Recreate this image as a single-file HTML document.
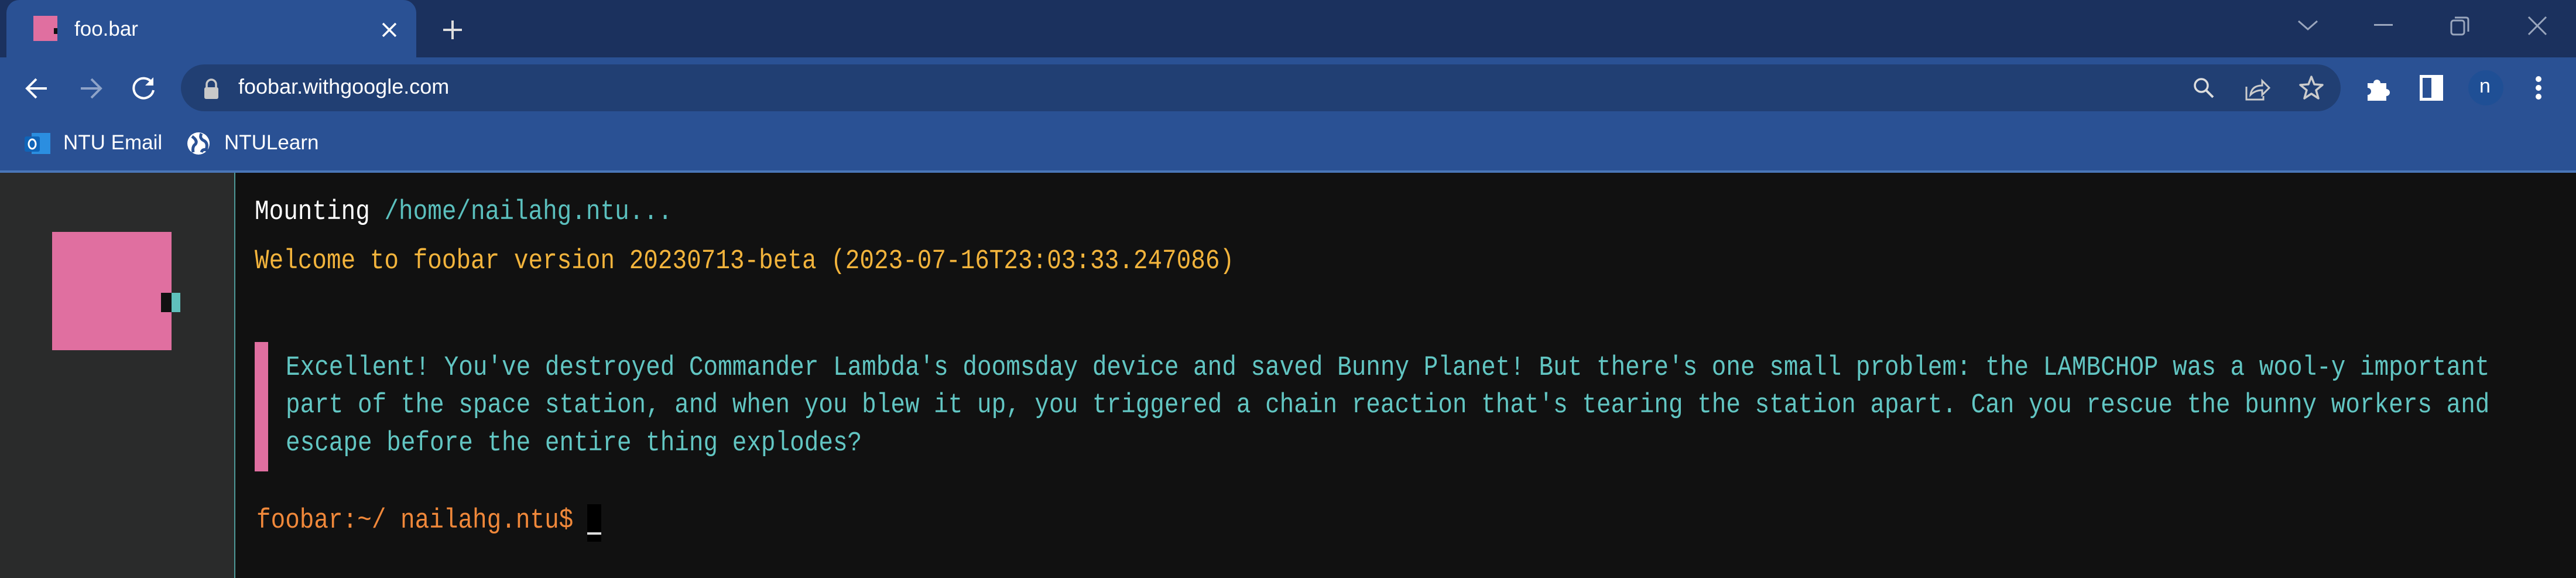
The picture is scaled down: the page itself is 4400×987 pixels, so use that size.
<!DOCTYPE html>
<html><head><meta charset="utf-8"><style>
*{margin:0;padding:0;box-sizing:border-box}
body{width:4400px;height:987px;overflow:hidden;background:#111;position:relative;font-family:"Liberation Sans",sans-serif}
.a{position:absolute}
.t{position:absolute;font-family:"Liberation Mono",monospace;font-size:41px;line-height:41px;white-space:pre;transform:scaleY(1.15);transform-origin:0 31px}
.ui{color:#fff;font-size:35px;line-height:40px}
</style></head><body>
<!-- tab strip -->
<div class="a" style="left:0;top:0;width:4400px;height:98px;background:#1b315e"></div>
<div class="a" style="left:11px;top:0;width:700px;height:98px;background:#2a5194;border-radius:22px 22px 0 0"></div>
<div class="a" style="left:57px;top:27px;width:41px;height:43px;background:#e06fa0"></div>
<div class="a" style="left:92px;top:48px;width:6px;height:10px;background:#111"></div>
<div class="a ui" style="left:127px;top:30px">foo.bar</div>
<svg class="a" style="left:650px;top:36px" width="30" height="30"><path d="M4 4L26 26M26 4L4 26" stroke="#fff" stroke-width="3.5"/></svg>
<svg class="a" style="left:754px;top:32px" width="38" height="38"><path d="M19 3V35M3 19H35" stroke="#ddd" stroke-width="4"/></svg>
<svg class="a" style="left:3922px;top:32px" width="40" height="22"><path d="M4 4L20 18L36 4" stroke="#9aa6bd" stroke-width="3" fill="none"/></svg>
<div class="a" style="left:4055px;top:41px;width:32px;height:3px;background:#9aa6bd"></div>
<svg class="a" style="left:4184px;top:26px" width="36" height="36"><rect x="3" y="9" width="22" height="24" rx="4" stroke="#9aa6bd" stroke-width="3" fill="none"/><path d="M9 4H28Q32 4 32 8V28" stroke="#9aa6bd" stroke-width="3" fill="none"/></svg>
<svg class="a" style="left:4316px;top:26px" width="36" height="36"><path d="M3 3L33 33M33 3L3 33" stroke="#9aa6bd" stroke-width="3"/></svg>
<!-- toolbar -->
<div class="a" style="left:0;top:98px;width:4400px;height:195px;background:#2a5194"></div>
<div class="a" style="left:0;top:291px;width:4400px;height:4px;background:#4a76b8"></div>
<svg class="a" style="left:40px;top:128px" width="46" height="46"><path d="M40 23H6M22 7L6 23L22 39" stroke="#fff" stroke-width="4" fill="none"/></svg>
<svg class="a" style="left:132px;top:128px" width="46" height="46"><path d="M6 23H40M24 7L40 23L24 39" stroke="#8ea3c8" stroke-width="4" fill="none"/></svg>
<svg class="a" style="left:222px;top:126px" width="48" height="48"><path d="M38 16A17 17 0 1 0 40 28" stroke="#fff" stroke-width="4" fill="none"/><path d="M40 6V20H26" fill="#fff"/></svg>
<div class="a" style="left:309px;top:110px;width:3689px;height:80px;background:#213f73;border-radius:40px"></div>
<svg class="a" style="left:346px;top:134px" width="30" height="36"><path d="M7 16V10A8 8 0 0 1 23 10V16" stroke="#c9c9c9" stroke-width="3.5" fill="none"/><rect x="3" y="15" width="24" height="20" rx="3" fill="#c9c9c9"/></svg>
<div class="a ui" style="left:407px;top:128px;font-size:36px">foobar.withgoogle.com</div>
<svg class="a" style="left:3744px;top:130px" width="42" height="42"><circle cx="16" cy="16" r="11" stroke="#ddd" stroke-width="3.5" fill="none"/><path d="M24 24L36 36" stroke="#ddd" stroke-width="4"/></svg>
<svg class="a" style="left:3834px;top:128px" width="44" height="46"><path d="M3 20V42H32V36" stroke="#ccc" stroke-width="3" fill="none"/><path d="M10 34Q12 18 30 18V10L42 22L30 34V26Q18 26 10 34Z" stroke="#ccc" stroke-width="3" fill="none"/></svg>
<svg class="a" style="left:3926px;top:128px" width="44" height="44"><path d="M22 3L27 16L41 17L30 26L34 40L22 32L10 40L14 26L3 17L17 16Z" stroke="#ccc" stroke-width="3.5" fill="none" stroke-linejoin="round"/></svg>
<svg class="a" style="left:4040px;top:128px" width="46" height="46"><path d="M4 14H14A6 6 0 0 1 26 14H36V24A6 6 0 0 1 36 36V44H4V34A6 6 0 0 0 4 22Z" fill="#fff"/></svg>
<svg class="a" style="left:4133px;top:128px" width="40" height="44"><rect x="2.5" y="2.5" width="35" height="39" stroke="#fff" stroke-width="5" fill="none"/><rect x="20" y="2" width="18" height="40" fill="#fff"/></svg>
<div class="a" style="left:4216px;top:120px;width:60px;height:60px;border-radius:30px;background:#1f4f95"></div>
<div class="a ui" style="left:4235px;top:127px;font-size:34px">n</div>
<div class="a" style="left:4331px;top:130px;width:10px;height:10px;border-radius:5px;background:#fff"></div>
<div class="a" style="left:4331px;top:145px;width:10px;height:10px;border-radius:5px;background:#fff"></div>
<div class="a" style="left:4331px;top:160px;width:10px;height:10px;border-radius:5px;background:#fff"></div>
<!-- bookmarks -->
<svg class="a" style="left:40px;top:225px" width="48" height="40"><rect x="14" y="2" width="32" height="36" fill="#2b8ee0"/><rect x="2" y="8" width="26" height="26" rx="3" fill="#0f64b8"/><ellipse cx="15" cy="21" rx="6" ry="8" stroke="#fff" stroke-width="3" fill="none"/></svg>
<div class="a ui" style="left:108px;top:224px">NTU Email</div>
<svg class="a" style="left:318px;top:224px" width="42" height="42"><circle cx="21" cy="21" r="19" fill="#fff"/><path d="M10 9Q20 16 16 22Q10 26 12 36M26 4Q22 12 30 16Q38 20 34 32Q28 30 26 36" stroke="#2a5194" stroke-width="5" fill="none"/></svg>
<div class="a ui" style="left:383px;top:224px">NTULearn</div>
<!-- content -->
<div class="a" style="left:0;top:295px;width:400px;height:692px;background:#2a2b2b"></div>
<div class="a" style="left:400px;top:295px;width:2px;height:692px;background:#4e9a98"></div>
<div class="a" style="left:89px;top:396px;width:204px;height:202px;background:#e06fa0"></div>
<div class="a" style="left:275px;top:500px;width:18px;height:33px;background:#111"></div>
<div class="a" style="left:293px;top:500px;width:15px;height:33px;background:#5fc0bc"></div>
<div class="t" style="left:435px;top:344px;color:#fff">Mounting <span style="color:#5bc0be">/home/nailahg.ntu...</span></div>
<div class="t" style="left:435px;top:428px;color:#f3b43c">Welcome to foobar version 20230713-beta (2023-07-16T23:03:33.247086)</div>
<div class="a" style="left:435px;top:584px;width:23px;height:221px;background:#e06fa0"></div>
<div class="t" style="left:488px;top:610px;color:#62c6c3">Excellent! You've destroyed Commander Lambda's doomsday device and saved Bunny Planet! But there's one small problem: the LAMBCHOP was a wool-y important</div>
<div class="t" style="left:488px;top:674px;color:#62c6c3">part of the space station, and when you blew it up, you triggered a chain reaction that's tearing the station apart. Can you rescue the bunny workers and</div>
<div class="t" style="left:488px;top:739px;color:#62c6c3">escape before the entire thing explodes?</div>
<div class="t" style="left:438px;top:871px;color:#f0883a">foobar:~/ nailahg.ntu$</div>
<div class="a" style="left:1003px;top:861px;width:24px;height:64px;background:#000"></div>
<div class="a" style="left:1003px;top:909px;width:24px;height:4px;background:#ddd"></div>
</body></html>
